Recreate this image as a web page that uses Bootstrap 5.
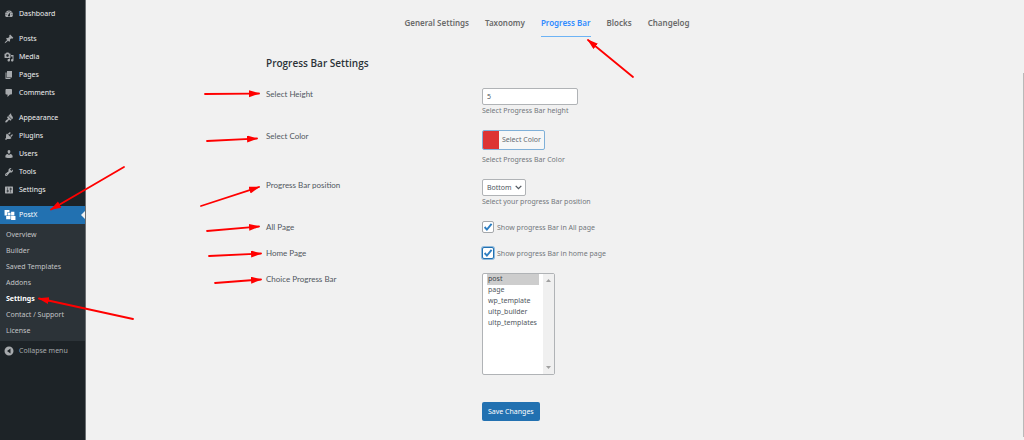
<!DOCTYPE html>
<html lang="en">
<head>
<meta charset="utf-8">
<meta name="viewport" content="width=device-width, initial-scale=1">
<title>PostX Settings</title>
<link href="https://cdn.jsdelivr.net/npm/bootstrap@5.3.0/dist/css/bootstrap.min.css" rel="stylesheet">
<style>
body{font-family:"Noto Sans","Open Sans",sans-serif;font-size:7px;line-height:12px;background:#f1f1f1;color:#50575e}
a{text-decoration:none}
.admin-menu{width:86px;background:#1d2327;border-right:1px solid #6b6f72;padding-top:5px}
.menu-group{margin-bottom:7px}
.menu-item{height:18px;padding-left:4px;gap:5px;color:#f0f0f1}
.menu-item svg{width:10px;height:10px;fill:#a7aaad}
.menu-item.current{background:#2271b1;color:#fff;position:relative}
.menu-item.current svg{width:12px;height:12px;fill:#fff;margin-right:-2px}
.menu-item.current::after{content:"";position:absolute;right:0;top:5px;border:4px solid transparent;border-right-color:#f1f1f1;border-left:0}
.submenu{background:#2c3338;padding:3px 0 2px 6px}
.submenu a{color:#c3c4c7;line-height:16px}
.submenu a.chosen{color:#fff;font-weight:700}
.collapse-btn{height:20px;color:#a7aaad}
.tabs{gap:16px;padding-top:14px}
.tabs a{color:#6a6a6a;font-size:8px;font-weight:600;line-height:18px;padding-bottom:4px;border-bottom:1px solid transparent}
.tabs a.on{color:#2f8bff;border-color:#6db3f5}
.settings{width:562px;max-width:100%}
.settings h1{font-family:"Open Sans",sans-serif;font-size:10px;font-weight:600;line-height:16px;color:#2c3338;margin:18px 0 17px}
.setting{min-height:13px;margin-bottom:13px}
.setting-name{width:216px;font-family:Lato,"Noto Sans",sans-serif;font-size:8px}
.help{color:#72777c;margin:0}
.field{border:1px solid #b0b3b6;border-radius:2px;background:#fff;color:#50575e;line-height:11px}
.num{width:96px;height:17px;padding:0 4px}
.color-btn{height:20px;border:1px solid #7fb0d8;border-radius:2px;background:#f6f7f7;color:#646970;padding:0;overflow:hidden}
.color-btn i{width:16px;background:#dd3333}
.color-btn span{padding:0 3px;line-height:18px}
.pos{width:44px;height:17px;padding:0 4px;appearance:none}
.pick{position:relative;width:44px}
.pick svg{position:absolute;right:4px;top:6px;width:7px;height:5px;pointer-events:none}
.tick{appearance:none;width:12px;height:12px;margin:0 3px 0 0;background:#fff;border:1px solid #a5a8ab;border-radius:2px}
.tick:checked{background:#fff url("data:image/svg+xml,%3Csvg xmlns='http://www.w3.org/2000/svg' viewBox='0 0 12 12'%3E%3Cpath d='M2.6 6l2.3 2.6L9.6 2.9' fill='none' stroke='%232f7fc2' stroke-width='1.9'/%3E%3C/svg%3E") center/12px}
.tick.ringed{border-color:#2271b1;box-shadow:0 0 0 1px #8fb9dc}
.tick + .help{line-height:14px;height:13px}
.types{position:relative;width:73px}
.types select{width:73px;height:102px;padding:0 4px;overflow:hidden;display:block}
.types option{padding:0 1px;min-height:0;height:11px;line-height:11px;width:52px}
.types option:checked{background:#cdcdcd linear-gradient(#cdcdcd,#cdcdcd);color:#3c434a}
.track{position:absolute;right:1px;top:1px;bottom:1px;width:11px;background:#f0f0f0;padding:5px 3px}
.track svg{width:5px;height:3px;fill:#a0a0a0}
.save{background:#2271b1;color:#fff;border:0;border-radius:2px;height:19px;padding:0 6px;margin:14px 0 19px 216px}
.arrows{position:absolute;left:0;top:0;pointer-events:none}
.thumb{position:absolute;right:0;top:73px;bottom:3px;width:1px;background:#b9b9b9}
</style>
<script src="https://cdn.jsdelivr.net/npm/bootstrap@5.3.0/dist/js/bootstrap.bundle.min.js"></script>
</head>
<body>
<div class="d-flex min-vh-100 position-relative">
<nav class="admin-menu flex-shrink-0" aria-label="Admin menu">
  <div class="menu-group">
    <a href="#" class="menu-item d-flex align-items-center"><svg viewBox="0 0 20 20"><path d="M3.76 16h12.48c1.1-1.37 1.76-3.11 1.76-5 0-4.42-3.58-8-8-8s-8 3.58-8 8c0 1.89.66 3.63 1.76 5zM10 4c.55 0 1 .45 1 1s-.45 1-1 1-1-.45-1-1 .45-1 1-1zM6 6c.55 0 1 .45 1 1s-.45 1-1 1-1-.45-1-1 .45-1 1-1zm8 0c.55 0 1 .45 1 1s-.45 1-1 1-1-.45-1-1 .45-1 1-1zm-5.37 5.55L12 7v6c0 1.1-.9 2-2 2s-2-.9-2-2c0-.57.24-1.08.63-1.45zM4 10c.55 0 1 .45 1 1s-.45 1-1 1-1-.45-1-1 .45-1 1-1zm12 0c.55 0 1 .45 1 1s-.45 1-1 1-1-.45-1-1 .45-1 1-1z"/></svg>Dashboard</a>
  </div>
  <div class="menu-group">
    <a href="#" class="menu-item d-flex align-items-center"><svg viewBox="0 0 20 20"><path d="M10.44 3.02l1.82-1.82 6.36 6.35-1.83 1.82c-1.05-.68-2.48-.57-3.41.36l-.75.75c-.92.93-1.04 2.35-.35 3.41l-1.83 1.82-2.41-2.41-2.8 2.79c-.42.42-3.38 2.71-3.8 2.29s1.86-3.39 2.28-3.81l2.79-2.79L4.1 9.36l1.83-1.82c1.05.69 2.48.57 3.4-.36l.75-.75c.93-.92 1.05-2.35.36-3.41z"/></svg>Posts</a>
    <a href="#" class="menu-item d-flex align-items-center"><svg viewBox="0 0 20 20"><path d="M13 11V4c0-.55-.45-1-1-1h-1.67L9 1H5L3.67 3H2c-.55 0-1 .45-1 1v7c0 .55.45 1 1 1h10c.55 0 1-.45 1-1zM7 4.500c1.38 0 2.500 1.120 2.500 2.500S8.380 9.500 7 9.500 4.500 8.380 4.500 7 5.620 4.500 7 4.500zM14 6h5v10.500c0 1.380-1.120 2.500-2.500 2.500S14 17.880 14 16.500s1.120-2.500 2.500-2.500c.17 0 .34.02.5.05V9h-3V6zm-4 8.050V13h2v3.500c0 1.380-1.120 2.500-2.500 2.500S7 17.880 7 16.500 8.120 14 9.500 14c.17 0 .34.02.5.05z"/></svg>Media</a>
    <a href="#" class="menu-item d-flex align-items-center"><svg viewBox="0 0 20 20"><path d="M6 15V2h10v13H6zm-1 1h8v2H3V5h2v11z"/></svg>Pages</a>
    <a href="#" class="menu-item d-flex align-items-center"><svg viewBox="0 0 20 20"><path d="M5 2h9c1.1 0 2 .9 2 2v7c0 1.1-.9 2-2 2h-2l-5 5v-5H5c-1.1 0-2-.9-2-2V4c0-1.1.9-2 2-2z"/></svg>Comments</a>
  </div>
  <div class="menu-group">
    <a href="#" class="menu-item d-flex align-items-center"><svg viewBox="0 0 20 20"><path transform="matrix(-1 0 0 1 20 0) rotate(-90 10 10)" d="M14.48 11.06L7.41 3.99l1.5-1.5c.5-.56 2.3-.47 3.51.32 1.21.8 1.43 1.28 2.91 2.1 1.18.64 2.45 1.26 4.45.85zm-.71.71L6.7 4.7 4.93 6.47c-.39.39-.39 1.02 0 1.41l1.06 1.06c.39.39.39 1.03 0 1.42-.6.6-1.43 1.11-2.21 1.69-.35.26-.7.53-1.01.84C1.43 14.23.4 16.08 1.4 17.07c.99 1 2.84-.03 4.18-1.36.31-.31.58-.66.85-1.02.57-.78 1.08-1.61 1.69-2.21.39-.39 1.02-.39 1.41 0l1.06 1.06c.39.39 1.02.39 1.41 0z"/></svg>Appearance</a>
    <a href="#" class="menu-item d-flex align-items-center"><svg viewBox="0 0 20 20"><path d="M13.11 4.36L9.87 7.6 8 5.73l3.24-3.24c.35-.34 1.05-.2 1.56.32.52.51.66 1.21.31 1.55zm-8 1.77l.91-1.12 9.01 9.01-1.19.84c-.71.71-2.63 1.16-3.82 1.16H6.14L4.9 17.26c-.59.59-1.54.59-2.12 0-.59-.58-.59-1.53 0-2.12l1.24-1.24v-3.88c0-1.13.4-3.19 1.09-3.89zm7.26 3.97l3.24-3.24c.34-.35 1.04-.21 1.55.31.52.51.66 1.21.31 1.55l-3.24 3.25z"/></svg>Plugins</a>
    <a href="#" class="menu-item d-flex align-items-center"><svg viewBox="0 0 20 20"><path d="M10 9.25c-2.27 0-2.73-3.44-2.73-3.44C7 4.02 7.82 2 9.97 2c2.16 0 2.98 2.02 2.71 3.81 0 0-.41 3.44-2.68 3.44zm0 2.57L12.72 10c2.39 0 4.52 2.33 4.52 4.53v2.49s-3.65 1.13-7.24 1.13c-3.65 0-7.24-1.13-7.24-1.13v-2.49c0-2.25 1.94-4.48 4.47-4.48z"/></svg>Users</a>
    <a href="#" class="menu-item d-flex align-items-center"><svg viewBox="0 0 20 20"><path d="M16.68 9.77c-1.34 1.34-3.3 1.67-4.95.99l-5.41 6.52c-.99.99-2.59.99-3.58 0s-.99-2.59 0-3.57l6.52-5.42c-.68-1.65-.35-3.61.99-4.95 1.28-1.28 3.12-1.62 4.72-1.06l-2.89 2.89 2.82 2.82 2.86-2.87c.53 1.58.18 3.39-1.08 4.65zM3.81 16.21c.4.39 1.04.39 1.43 0 .4-.4.4-1.04 0-1.43-.39-.4-1.03-.4-1.43 0-.39.39-.39 1.03 0 1.43z"/></svg>Tools</a>
    <a href="#" class="menu-item d-flex align-items-center"><svg viewBox="0 0 20 20"><path d="M18 16V4c0-.55-.45-1-1-1H3c-.55 0-1 .45-1 1v12c0 .55.45 1 1 1h14c.55 0 1-.45 1-1zM8 11h1c.55 0 1 .45 1 1s-.45 1-1 1H8v1.5c0 .28-.22.5-.5.5s-.5-.22-.5-.5V13H6c-.55 0-1-.45-1-1s.45-1 1-1h1V5.5c0-.28.22-.5.5-.5s.5.22.5.5V11zm5-2h-1c-.55 0-1-.45-1-1s.45-1 1-1h1V5.5c0-.28.22-.5.5-.5s.5.22.5.5V7h1c.55 0 1 .45 1 1s-.45 1-1 1h-1v5.5c0 .28-.22.5-.5.5s-.5-.22-.5-.5V9z"/></svg>Settings</a>
  </div>
  <a href="#" class="menu-item current d-flex align-items-center" aria-current="true"><svg viewBox="0 0 22 22"><path d="M1 2h9v4H6v4H1zM7 7h5v5H7zM13 5h6v7h-6zM4 13h8v6H4zM13 13h8v7h-8zM1 10h5v2H1z"/></svg>PostX</a>
  <div class="submenu d-flex flex-column">
    <a href="#">Overview</a><a href="#">Builder</a><a href="#">Saved Templates</a><a href="#">Addons</a><a href="#" class="chosen" aria-current="page">Settings</a><a href="#">Contact / Support</a><a href="#">License</a>
  </div>
  <button type="button" class="menu-item collapse-btn d-flex align-items-center bg-transparent border-0 py-0 pe-0"><svg viewBox="0 0 20 20"><path fill-rule="evenodd" d="M10 1a9 9 0 1 0 0 18 9 9 0 0 0 0-18zM13 5v10L6 10z"/></svg>Collapse menu</button>
</nav>
<main class="flex-grow-1 d-flex flex-column align-items-center pe-3">
  <nav class="tabs d-flex" aria-label="Settings sections">
    <a href="#">General Settings</a><a href="#">Taxonomy</a><a href="#" class="on" aria-current="page">Progress Bar</a><a href="#">Blocks</a><a href="#">Changelog</a>
  </nav>
  <form class="settings">
    <h1>Progress Bar Settings</h1>
    <div class="setting d-flex"><label class="setting-name" for="height">Select Height</label><div><input class="field num d-block" id="height" type="text" value="5"><p class="help">Select Progress Bar height</p></div></div>
    <div class="setting d-flex"><label class="setting-name" for="color">Select Color</label><div><button type="button" id="color" class="color-btn d-flex align-items-stretch mb-1"><i></i><span>Select Color</span></button><p class="help">Select Progress Bar Color</p></div></div>
    <div class="setting d-flex"><label class="setting-name" for="position">Progress Bar position</label><div><div class="pick"><select class="field pos d-block" id="position"><option>Bottom</option><option>Top</option></select><svg viewBox="0 0 7 5"><path d="M.7.900L3.500 3.700 6.300.900" fill="none" stroke="#50575e" stroke-width="1.300"/></svg></div><p class="help">Select your progress Bar position</p></div></div>
    <div class="setting d-flex"><span class="setting-name">All Page</span><div class="d-flex"><input type="checkbox" class="tick" id="all" checked><label class="help" for="all">Show progress Bar in All page</label></div></div>
    <div class="setting d-flex"><span class="setting-name">Home Page</span><div class="d-flex"><input type="checkbox" class="tick ringed" id="home" checked><label class="help" for="home">Show progress Bar in home page</label></div></div>
    <div class="setting d-flex"><label class="setting-name" for="types">Choice Progress Bar</label><div class="types"><select class="field" id="types" multiple><option selected>post</option><option>page</option><option>wp_template</option><option>ultp_builder</option><option>ultp_templates</option></select><div class="track d-flex flex-column justify-content-between"><svg viewBox="0 0 5 3"><path d="M0 3L2.500 0 5 3z"/></svg><svg viewBox="0 0 5 3"><path d="M0 0h5L2.500 3z"/></svg></div></div></div>
    <button type="submit" class="save">Save Changes</button>
  </form>
</main>
<div class="thumb"></div>
<svg class="arrows" width="640" height="330" viewBox="0 0 640 330" aria-hidden="true">
  <defs><marker id="tip" markerUnits="userSpaceOnUse" markerWidth="12" markerHeight="8" refX="10" refY="3.500" orient="auto"><path d="M0 0L11 3.500 0 7z" fill="#f00" stroke="none"/></marker></defs>
  <g stroke="#f00" stroke-width="1.800" stroke-linecap="round">
    <g marker-end="url(#tip)"><path d="M124 167L58 205.500L51 209.500"/><path d="M133 319L46 300L39 298.500"/><path d="M633 77L594 45L588 40"/><path d="M205 94L252 93.600L259 93.500"/><path d="M207 141L250 138.900L257 138.500"/><path d="M201 206L252 189.300L259 187"/><path d="M207 231L252 227.100L259 226.500"/><path d="M209 256L254 253.900L261 253.500"/><path d="M215 283L254 280L261 279.500"/></g>
  </g>
</svg>
</div>
</body>
</html>
